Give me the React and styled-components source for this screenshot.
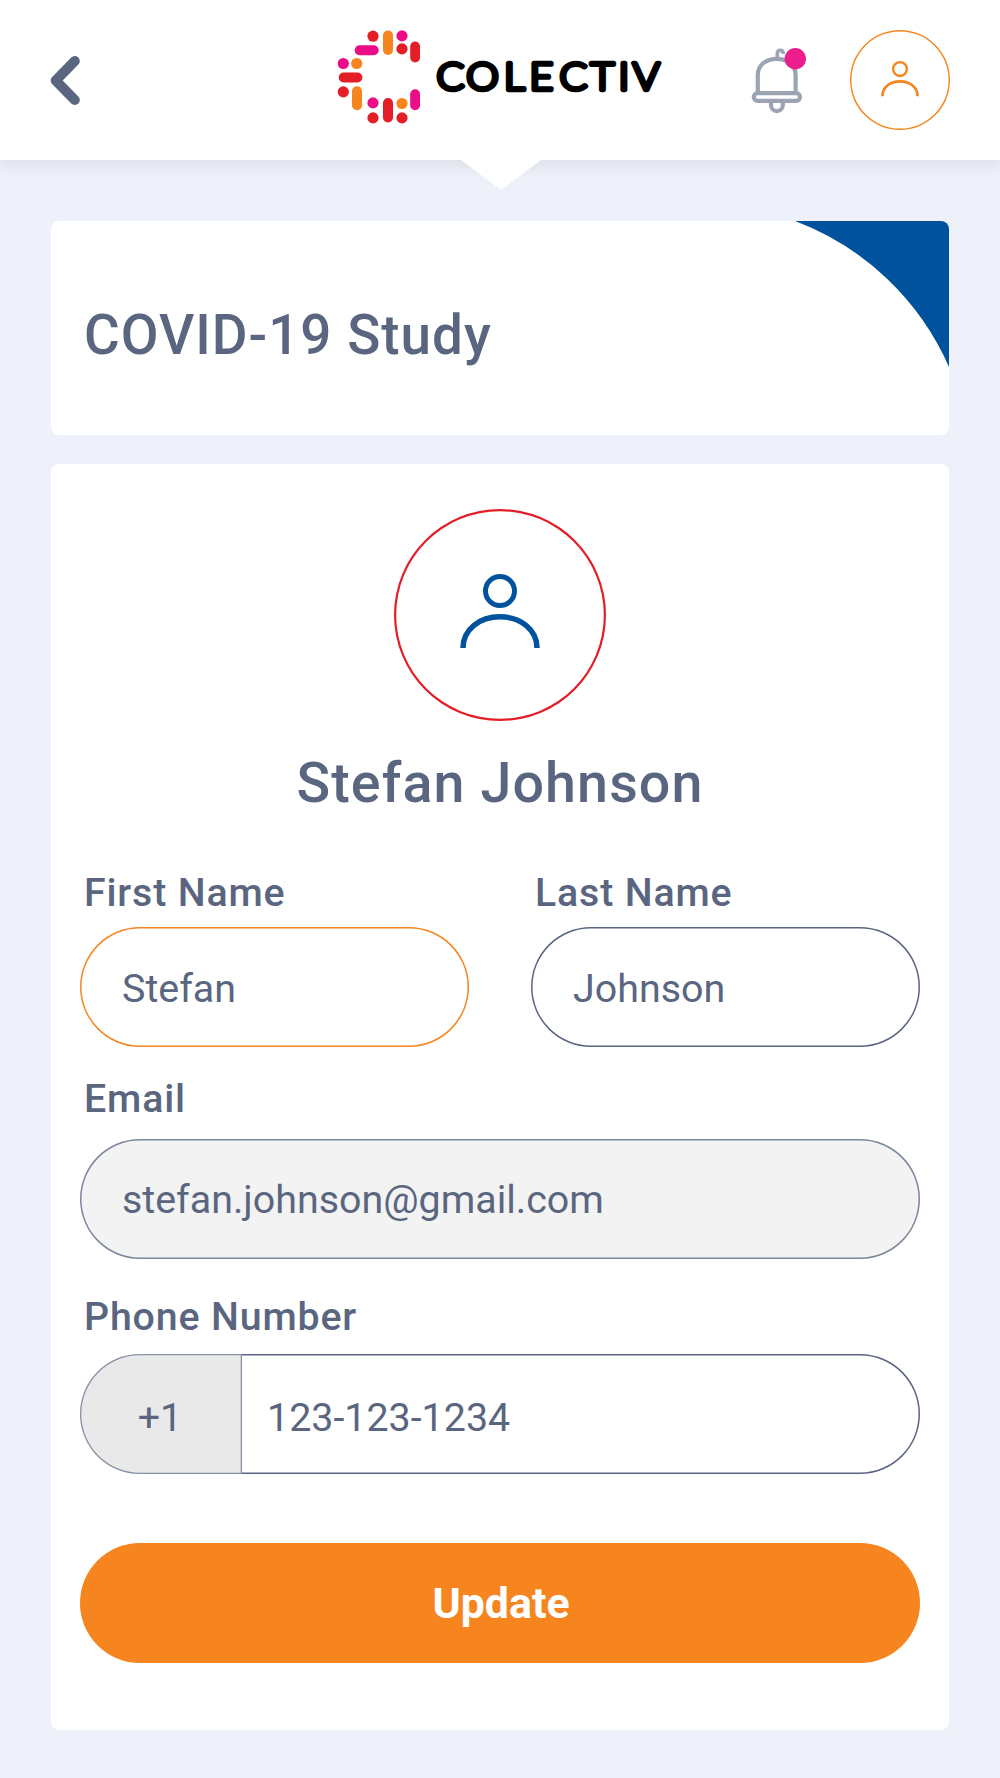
import React, { useState } from 'react';
import styled, { createGlobalStyle } from 'styled-components';

const GlobalStyle = createGlobalStyle`
  * {
    box-sizing: border-box;
  }

  body {
    margin: 0;
    background: #eef1f9;
    color: #5a6680;
    font-family: Roboto, 'Liberation Sans', sans-serif;
  }
`;

const Page = styled.div`
  width: 1000px;
  height: 1778px;
  overflow: hidden;
`;

const Header = styled.header`
  position: relative;
  display: flex;
  align-items: flex-start;
  height: 160px;
  padding: 30px 50px 0;
  background: white;
  box-shadow: 0 9px 14px rgba(0, 0, 0, 0.06);
`;

const Notch = styled.svg`
  position: absolute;
  top: 159px;
  left: 460px;
`;

const IconButton = styled.button`
  display: block;
  padding: 0;
  border: none;
  background: none;
  cursor: pointer;

  svg {
    display: block;
  }
`;

const BackButton = styled(IconButton)`
  margin: 25px 257px 0 0;
`;

const Logo = styled.svg`
  display: block;
  margin-right: 83px;
`;

const BellButton = styled(IconButton)`
  margin: 17px 43px 0 0;
`;

const Avatar = styled.div`
  display: flex;
  align-items: center;
  justify-content: center;
  flex-shrink: 0;
  width: ${props => props.$size}px;
  height: ${props => props.$size}px;
  padding-bottom: ${props => props.$lift}px;
  border-radius: 50%;
  box-shadow: inset 0 0 0 ${props => props.$line}px ${props => props.$ring};
`;

const Main = styled.main`
  display: flex;
  flex-direction: column;
  gap: 29px;
  padding: 61px 51px 48px;
`;

const Card = styled.section`
  position: relative;
  overflow: hidden;
  background: white;
  border-radius: 8px;
`;

const StudyCard = styled(Card)`
  height: 214px;
  padding: 82px 33px 0;
`;

const Corner = styled.svg`
  position: absolute;
  top: 0;
  right: 0;
`;

const Title = styled.h1`
  margin: 0;
  font-size: 54.8px;
  font-weight: 500;
  line-height: 64px;
  letter-spacing: 1px;
`;

const ProfileCard = styled(Card)`
  display: flex;
  flex-direction: column;
  align-items: center;
  height: 1266px;
  padding: 45px 29px 0;
`;

const Name = styled(Title).attrs({ as: 'h2' })`
  margin: 30px 0 55px;
  font-size: 55.6px;
  letter-spacing: 1.1px;
`;

const Form = styled.form`
  display: flex;
  flex-direction: column;
  width: 100%;
`;

const Row = styled.div`
  display: grid;
  grid-template-columns: 1fr 1fr;
  gap: 62px;
`;

const Field = styled.label`
  display: flex;
  flex-direction: column;
  gap: ${props => props.$gap}px;
  margin-top: ${props => props.$top || 0}px;
`;

const LabelText = styled.span`
  padding-left: 4px;
  font-size: 39.3px;
  font-weight: 500;
  line-height: 46px;
  letter-spacing: 0.85px;
`;

const Input = styled.input`
  display: block;
  width: 100%;
  height: 120px;
  padding: ${props => props.$shift || 0}px 42px 0;
  border: none;
  border-radius: 60px;
  outline: none;
  background: ${props => (props.disabled ? '#f3f3f3' : 'white')};
  box-shadow: inset 0 0 0 1.5px ${props => props.$line || '#5a6680'};
  color: #5a6680;
  font: 400 39.4px Roboto, 'Liberation Sans', sans-serif;
`;

const PhoneBox = styled.div`
  display: flex;
  height: 120px;
`;

const CountryCode = styled.span`
  position: relative;
  z-index: 1;
  display: flex;
  align-items: center;
  justify-content: center;
  width: 162px;
  padding: 6px 2px 0 0;
  border-radius: 60px 0 0 60px;
  background: #e9e9e9;
  box-shadow: inset 0 0 0 1.3px #8792a5;
  font-size: 39.4px;
`;

const PhoneInput = styled(Input)`
  flex: 1;
  width: auto;
  margin-left: -2px;
  padding: 6px 27px 0;
  border-radius: 0 60px 60px 0;
`;

const UpdateButton = styled.button`
  height: 120px;
  margin-top: 69px;
  padding: 0 0 0 2px;
  border: none;
  border-radius: 60px;
  background: #f6851f;
  color: white;
  font: 700 42.9px Roboto, 'Liberation Sans', sans-serif;
  cursor: pointer;
`;

const RED = '#e41e26';
const PINK = '#ec0c87';
const ORANGE = '#f6851f';

const dots = [
  [373, 36, RED],
  [402, 35.7, PINK],
  [402, 48.7, RED],
  [343.3, 63.3, PINK],
  [356.7, 63.3, ORANGE],
  [343.3, 91.7, RED],
  [373, 102.7, PINK],
  [373, 117.7, RED],
  [402, 103.3, ORANGE],
  [402, 117.7, RED],
];

const bars = [
  [383, 30.3, 10, 24.4, ORANGE],
  [410.2, 41.3, 9.8, 21, RED],
  [354.7, 45, 24, 10, PINK],
  [338.7, 72.3, 23.7, 10, RED],
  [352, 86, 10, 24, ORANGE],
  [383, 97.8, 10, 24.4, RED],
  [410.2, 89, 9.8, 21, PINK],
];

// the wordmark is spaced letter by letter, measured from its own left edge
const ColectivLogo = () => (
  <Logo width="330" height="94" viewBox="337 29.8 330 94">
    {dots.map(([x, y, fill]) => (
      <circle key={`${x}-${y}`} cx={x} cy={y} r="5.6" fill={fill} />
    ))}
    {bars.map(([x, y, w, h, fill]) => (
      <rect key={`${x}-${y}`} x={x} y={y} width={w} height={h} rx="4.9" fill={fill} />
    ))}
    <text
      transform="translate(436 89.8) scale(1.08 1)"
      x="0.5 28 63 86.5 114.3 143 169 182.2"
      y="0"
      fontFamily="Lato, sans-serif"
      fontSize="38"
      fontWeight="300"
      fill="black"
      stroke="black"
      strokeWidth="4.5"
      strokeLinejoin="round"
    >
      COLECTIV
    </text>
  </Logo>
);

const PersonIcon = ({ width, color }) => (
  <svg width={width} viewBox="0 0 80 74" fill="none" stroke={color}>
    <circle cx="40" cy="17" r="14.5" strokeWidth="5" />
    <path d="M3 74C3 55 20 42.8 40 42.8S77 55 77 74" strokeWidth="5.5" />
  </svg>
);

const BackIcon = () => (
  <svg width="30" height="50" viewBox="0 0 30 50" fill="none">
    <path d="M24.8 6L5.7 25.5L24.8 45" stroke="#5a6680" strokeWidth="10" strokeLinecap="round" strokeLinejoin="round" />
  </svg>
);

const BellIcon = () => (
  <svg width="57" height="68" viewBox="750 47 57 68" fill="none" stroke="#9ca4b3" strokeWidth="4.2">
    <path d="M757.8 92V75C757.8 65 766 58.8 776.7 58.8S795.6 65 795.6 75V92" />
    <path d="M777.3 58V54C777.3 49 783.3 49 783.3 54" strokeWidth="3.6" />
    <rect x="753.8" y="93.2" width="46.2" height="7.6" rx="3.8" />
    <path d="M771 102V105.2A5.9 5.9 0 0 0 782.8 105.2V102" />
    <circle cx="795.3" cy="58.7" r="10.7" fill="#eb1e8c" stroke="none" />
  </svg>
);

const App = () => {
  const [form, setForm] = useState({
    first: 'Stefan',
    last: 'Johnson',
    email: 'stefan.johnson@gmail.com',
    phone: '123-123-1234',
  });

  const handleChange = (e) => {
    setForm({ ...form, [e.target.name]: e.target.value });
  };

  const handleSubmit = (e) => {
    e.preventDefault();
  };

  return (
    <Page>
      <GlobalStyle />
      <Header>
        <BackButton aria-label="Back"><BackIcon /></BackButton>
        <ColectivLogo />
        <BellButton aria-label="Notifications"><BellIcon /></BellButton>
        <Avatar $size={100} $lift={2} $line={1.4} $ring="#f6851f">
          <PersonIcon width={38} color="#f6851f" />
        </Avatar>
        <Notch width="82" height="32" viewBox="0 0 82 32">
          <path d="M0 0H82L81 1L41 31L1 1Z" fill="white" />
        </Notch>
      </Header>
      <Main>
        <StudyCard>
          <Title>COVID-19 Study</Title>
          <Corner width="154" height="146" viewBox="0 0 154 146">
            <path d="M0 0A273 273 0 0 1 154 146V0Z" fill="#00529c" />
          </Corner>
        </StudyCard>
        <ProfileCard>
          <Avatar $size={212} $lift={9} $line={2.2} $ring="#e41e26">
            <PersonIcon width={80} color="#00529c" />
          </Avatar>
          <Name>Stefan Johnson</Name>
          <Form onSubmit={handleSubmit}>
            <Row>
              <Field $gap={11}>
                <LabelText>First Name</LabelText>
                <Input name="first" value={form.first} onChange={handleChange} $line="#f6851f" $shift={2} />
              </Field>
              <Field $gap={11}>
                <LabelText>Last Name</LabelText>
                <Input name="last" value={form.last} onChange={handleChange} $shift={2} />
              </Field>
            </Row>
            <Field $gap={17} $top={29}>
              <LabelText>Email</LabelText>
              <Input name="email" value={form.email} disabled $line="#7b879c" />
            </Field>
            <Field $gap={14} $top={35}>
              <LabelText>Phone Number</LabelText>
              <PhoneBox>
                <CountryCode>+1</CountryCode>
                <PhoneInput name="phone" value={form.phone} onChange={handleChange} />
              </PhoneBox>
            </Field>
            <UpdateButton type="submit">Update</UpdateButton>
          </Form>
        </ProfileCard>
      </Main>
    </Page>
  );
};

export default App;
